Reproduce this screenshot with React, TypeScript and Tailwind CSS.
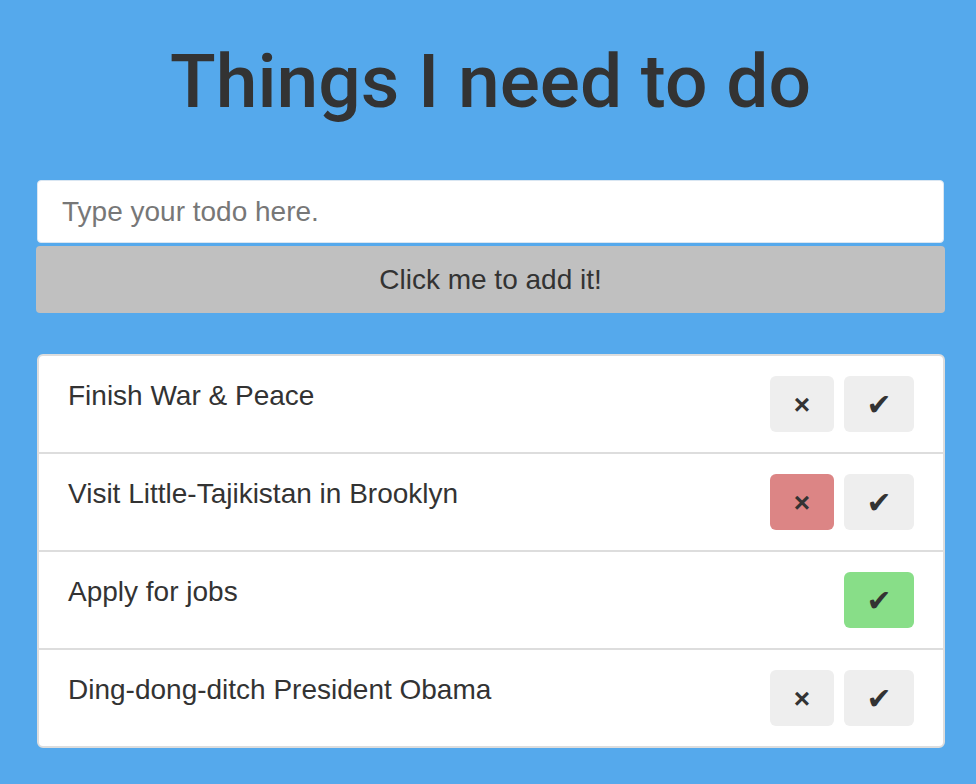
import { useState } from "react";

type Todo = { text: string; del: "plain" | "red" | "none"; done: "plain" | "green" };

const todos: Todo[] = [
  { text: "Finish War & Peace", del: "plain", done: "plain" },
  { text: "Visit Little-Tajikistan in Brooklyn", del: "red", done: "plain" },
  { text: "Apply for jobs", del: "none", done: "green" },
  { text: "Ding-dong-ditch President Obama", del: "plain", done: "plain" },
];

export default function App() {
  const [value, setValue] = useState("");

  return (
    <div
      className="min-h-[784px] bg-[#55a9ec] pl-[36px] pr-[31px] text-[#333]"
      style={{ fontFamily: '"Liberation Sans", Arial, sans-serif' }}
    >
      <h1
        className="pt-[44px] text-center text-[75px] leading-none font-medium"
        style={{ fontFamily: 'Roboto, "Liberation Sans", sans-serif' }}
      >
        Things I need to do
      </h1>

      <div className="mt-[61px] flex flex-col">
        <input
          value={value}
          onChange={(e) => setValue(e.target.value)}
          placeholder="Type your todo here."
          className="mx-[1px] h-[63px] rounded border border-[#d9e6f2] bg-white px-[24px] text-[28px] outline-none placeholder:text-[#777]"
        />
        <button className="mt-[3px] h-[67px] rounded bg-[#c0c0c0] text-[28px] text-[#333]">
          Click me to add it!
        </button>
      </div>

      <ul className="ml-[1px] mt-[41px] rounded-md border-2 border-[#dddddd] bg-white">
        {todos.map((t, i) => (
          <li
            key={i}
            className={
              "flex items-start justify-between px-[29px] py-[20px] " +
              (i > 0 ? "border-t-2 border-[#dddddd]" : "")
            }
          >
            <span className="text-[28px] leading-[40px] whitespace-nowrap">{t.text}</span>
            <div className="flex gap-[10px]">
              {t.del !== "none" && (
                <button
                  className={
                    "flex h-[56px] w-[64px] items-center justify-center rounded-md pt-[2px] text-[28px] font-bold text-[#333] " +
                    (t.del === "red" ? "bg-[#dc8585]" : "bg-[#eeeeee]")
                  }
                >
                  ×
                </button>
              )}
              <button
                className={
                  "flex h-[56px] w-[70px] items-center justify-center rounded-md text-[30px] text-[#333] " +
                  (t.done === "green" ? "bg-[#88de88]" : "bg-[#eeeeee]")
                }
                style={{ fontFamily: '"DejaVu Sans", sans-serif' }}
              >
                ✔
              </button>
            </div>
          </li>
        ))}
      </ul>
    </div>
  );
}
